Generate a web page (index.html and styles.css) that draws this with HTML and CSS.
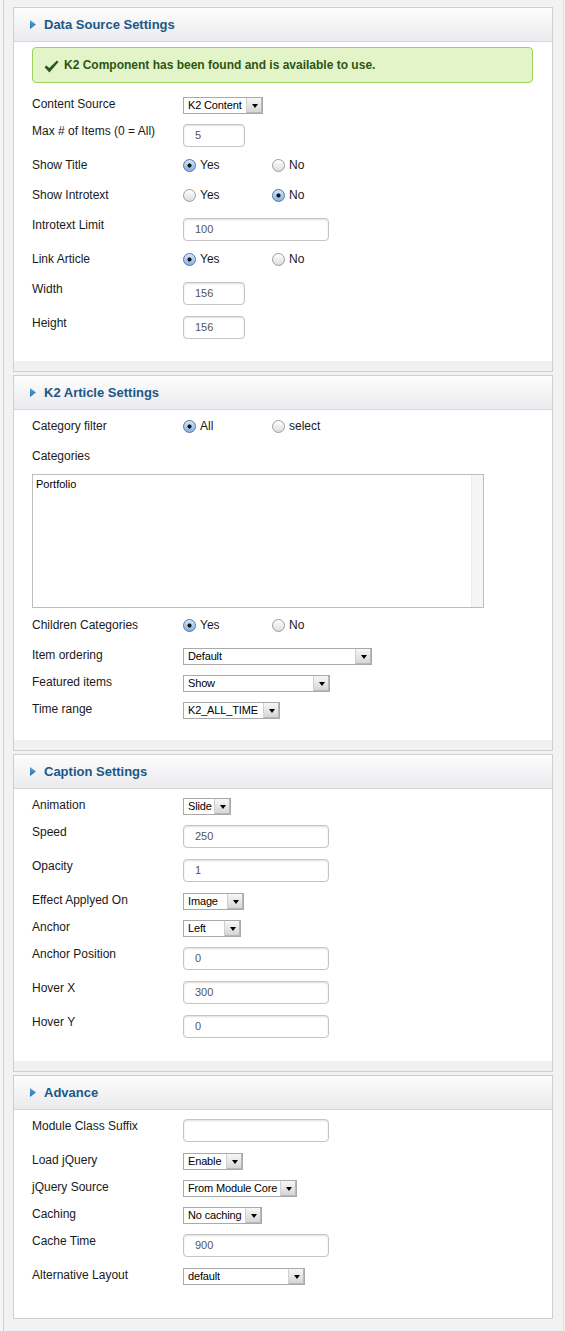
FILE: index.html
```html
<!DOCTYPE html>
<html>
<head>
<meta charset="utf-8">
<link rel="stylesheet" href="styles.css">
</head>
<body>
<div class="page">

  <section class="panel">
    <div class="ph">
      <svg class="tri" width="6" height="9" viewBox="0 0 6 9"><defs><linearGradient id="tg" x1="0" y1="0" x2="0" y2="1"><stop offset="0" stop-color="#5aa6dc"/><stop offset="1" stop-color="#1f6fae"/></linearGradient></defs><polygon points="0,0 6,4.5 0,9" fill="url(#tg)"/></svg>
      <h3>Data Source Settings</h3>
    </div>
    <div class="pb">
      <div class="msg">
        <svg class="check" width="15" height="13" viewBox="0 0 15 13"><path d="M0.5 7.2 L2.4 5.4 L5.2 8.1 L13 0.6 L14.5 2 L5.4 12.4 Z" fill="#2c5a16"/></svg>
        <span>K2 Component has been found and is available to use.</span>
      </div>
      <div class="row sel"><label>Content Source</label><div class="select s80"><span>K2 Content</span><i></i></div></div>
      <div class="row inp"><label>Max # of Items (0 = All)</label><div class="input short">5</div></div>
      <div class="row rad"><label>Show Title</label><div class="opt"><b class="radio on"></b>Yes</div><div class="opt"><b class="radio"></b>No</div></div>
      <div class="row rad"><label>Show Introtext</label><div class="opt"><b class="radio"></b>Yes</div><div class="opt"><b class="radio on"></b>No</div></div>
      <div class="row inp"><label>Introtext Limit</label><div class="input long">100</div></div>
      <div class="row rad"><label>Link Article</label><div class="opt"><b class="radio on"></b>Yes</div><div class="opt"><b class="radio"></b>No</div></div>
      <div class="row inp"><label>Width</label><div class="input short">156</div></div>
      <div class="row inp"><label>Height</label><div class="input short">156</div></div>
    </div>
    <div class="pf"></div>
  </section>

  <section class="panel">
    <div class="ph">
      <svg class="tri" width="6" height="9" viewBox="0 0 6 9"><polygon points="0,0 6,4.5 0,9" fill="url(#tg)"/></svg>
      <h3>K2 Article Settings</h3>
    </div>
    <div class="pb tight">
      <div class="row rad"><label>Category filter</label><div class="opt"><b class="radio on"></b>All</div><div class="opt"><b class="radio"></b>select</div></div>
      <div class="row lbl"><label>Categories</label></div>
      <div class="list"><div class="items">Portfolio</div><div class="track"></div></div>
      <div class="row rad"><label>Children Categories</label><div class="opt"><b class="radio on"></b>Yes</div><div class="opt"><b class="radio"></b>No</div></div>
      <div class="row sel"><label>Item ordering</label><div class="select s189"><span>Default</span><i></i></div></div>
      <div class="row sel"><label>Featured items</label><div class="select s147"><span>Show</span><i></i></div></div>
      <div class="row sel"><label>Time range</label><div class="select s97"><span>K2_ALL_TIME</span><i></i></div></div>
    </div>
    <div class="pf"></div>
  </section>

  <section class="panel">
    <div class="ph">
      <svg class="tri" width="6" height="9" viewBox="0 0 6 9"><polygon points="0,0 6,4.5 0,9" fill="url(#tg)"/></svg>
      <h3>Caption Settings</h3>
    </div>
    <div class="pb loose">
      <div class="row sel"><label>Animation</label><div class="select s48"><span>Slide</span><i></i></div></div>
      <div class="row inp"><label>Speed</label><div class="input long">250</div></div>
      <div class="row inp"><label>Opacity</label><div class="input long">1</div></div>
      <div class="row sel"><label>Effect Applyed On</label><div class="select s61"><span>Image</span><i></i></div></div>
      <div class="row sel"><label>Anchor</label><div class="select s58"><span>Left</span><i></i></div></div>
      <div class="row inp"><label>Anchor Position</label><div class="input long">0</div></div>
      <div class="row inp"><label>Hover X</label><div class="input long">300</div></div>
      <div class="row inp"><label>Hover Y</label><div class="input long">0</div></div>
    </div>
    <div class="pf"></div>
  </section>

  <section class="panel last">
    <div class="ph">
      <svg class="tri" width="6" height="9" viewBox="0 0 6 9"><polygon points="0,0 6,4.5 0,9" fill="url(#tg)"/></svg>
      <h3>Advance</h3>
    </div>
    <div class="pb">
      <div class="row inp"><label>Module Class Suffix</label><div class="input long"></div></div>
      <div class="row sel"><label>Load jQuery</label><div class="select s60"><span>Enable</span><i></i></div></div>
      <div class="row sel"><label>jQuery Source</label><div class="select s114"><span>From Module Core</span><i></i></div></div>
      <div class="row sel"><label>Caching</label><div class="select s79"><span>No caching</span><i></i></div></div>
      <div class="row inp"><label>Cache Time</label><div class="input long">900</div></div>
      <div class="row sel"><label>Alternative Layout</label><div class="select s122"><span>default</span><i></i></div></div>
    </div>
  </section>

</div>
</body>
</html>
```

FILE: styles.css
```css
html {
  background: #f6f6f6;
}
body {
  margin: 0;
  font-family: "Liberation Sans", Arial, sans-serif;
  font-size: 12px;
  color: #1a1a1a;
}
.page {
  margin-left: 3px;
  width: 540px;
  padding: 7px 10px 12px 9px;
  border-left: 1px solid #cfcfcf;
  border-right: 1px solid #dedede;
  background: #f2f2f2;
}
.panel {
  background: #fff;
  border: 1px solid #cfcfcf;
  margin-bottom: 3px;
}
.panel.last {
  margin-bottom: 0;
}
.ph {
  height: 33px;
  display: flex;
  align-items: center;
  padding-left: 16px;
  background: linear-gradient(#fdfdfd, #ebebef);
  border-bottom: 1px solid #d6d6d8;
}
.tri {
  display: block;
  margin-right: 8px;
}
.ph h3 {
  margin: 0;
  font-size: 13px;
  font-weight: bold;
  color: #1c5786;
}
.pb {
  padding: 0 0 22px 18px;
}
.pb.tight {
  padding-bottom: 21px;
}
.pb.loose {
  padding-bottom: 23px;
}
.panel.last .pb {
  padding-bottom: 33px;
}
.pf {
  height: 10px;
  background: #f1f1f1;
}
.pb > :first-child {
  margin-top: 9px;
}
.pb > .msg:first-child {
  margin-top: 5px;
}
.msg {
  width: 501px;
  height: 36px;
  box-sizing: border-box;
  border: 1px solid #9ed25b;
  border-radius: 4px;
  background: #e3f5c8;
  display: flex;
  align-items: center;
  padding-left: 11px;
  font-weight: bold;
  color: #2c5614;
}
.check {
  display: block;
  margin-right: 5px;
  margin-top: 2px;
}
.row {
  display: flex;
  align-items: flex-start;
  line-height: 14px;
}
.row label {
  width: 151px;
  flex: none;
}
.row.rad {
  align-items: center;
  height: 14px;
}
.msg + .row {
  margin-top: 14px;
}
.sel + * {
  margin-top: 10px;
}
.inp + * {
  margin-top: 11px;
}
.rad + * {
  margin-top: 16px;
}
.lbl + * {
  margin-top: 11px;
}
.list + * {
  margin-top: 10px;
}
.opt {
  display: flex;
  align-items: center;
  width: 89px;
}
.radio {
  width: 13px;
  height: 13px;
  box-sizing: border-box;
  border-radius: 50%;
  border: 1px solid #9c9c9c;
  background: linear-gradient(#ffffff, #dcdcdc);
  margin-right: 4px;
  flex: none;
}
.radio.on {
  border-color: #56749c;
  background: radial-gradient(circle, #111 0, #111 1.7px, rgba(0,0,0,0) 2.4px), linear-gradient(#d3e6fb, #86b2e4);
}
.input {
  height: 23px;
  box-sizing: border-box;
  border: 1px solid #c4c4c4;
  border-radius: 4px;
  box-shadow: inset 0 1px 2px rgba(0, 0, 0, 0.13);
  padding-left: 11px;
  font-size: 11px;
  line-height: 21px;
  color: #555;
  background: #fff;
}
.input.short {
  width: 62px;
}
.input.long {
  width: 146px;
}
.select {
  height: 17px;
  box-sizing: border-box;
  border: 1px solid #a9a9a9;
  display: flex;
  background: #fff;
}
.select span {
  flex: 1;
  padding-left: 4px;
  font-size: 11px;
  line-height: 15px;
  letter-spacing: -0.15px;
  color: #000;
  white-space: nowrap;
}
.select i {
  width: 15px;
  flex: none;
  border-left: 1px solid #d0d0d0;
  background: linear-gradient(#f7f7f7, #d4d4d4);
  box-shadow: inset -1px -1px 0 #b8b8b8;
  display: flex;
  align-items: center;
  justify-content: center;
}
.select i::after {
  content: "";
  border-left: 3px solid transparent;
  border-right: 3px solid transparent;
  border-top: 4px solid #000;
}
.s48 { width: 48px; }
.s58 { width: 58px; }
.s60 { width: 60px; }
.s61 { width: 61px; }
.s79 { width: 79px; }
.s80 { width: 80px; }
.s97 { width: 97px; }
.s114 { width: 114px; }
.s122 { width: 122px; }
.s147 { width: 147px; }
.s189 { width: 189px; }
.list {
  width: 452px;
  height: 134px;
  box-sizing: border-box;
  border: 1px solid #bdbdbd;
  display: flex;
}
.list .items {
  flex: 1;
  padding: 2px 3px;
  font-size: 11px;
  line-height: 14px;
  color: #000;
}
.list .track {
  width: 11px;
  background: #f5f5f5;
  border-left: 1px solid #ececec;
}
```
